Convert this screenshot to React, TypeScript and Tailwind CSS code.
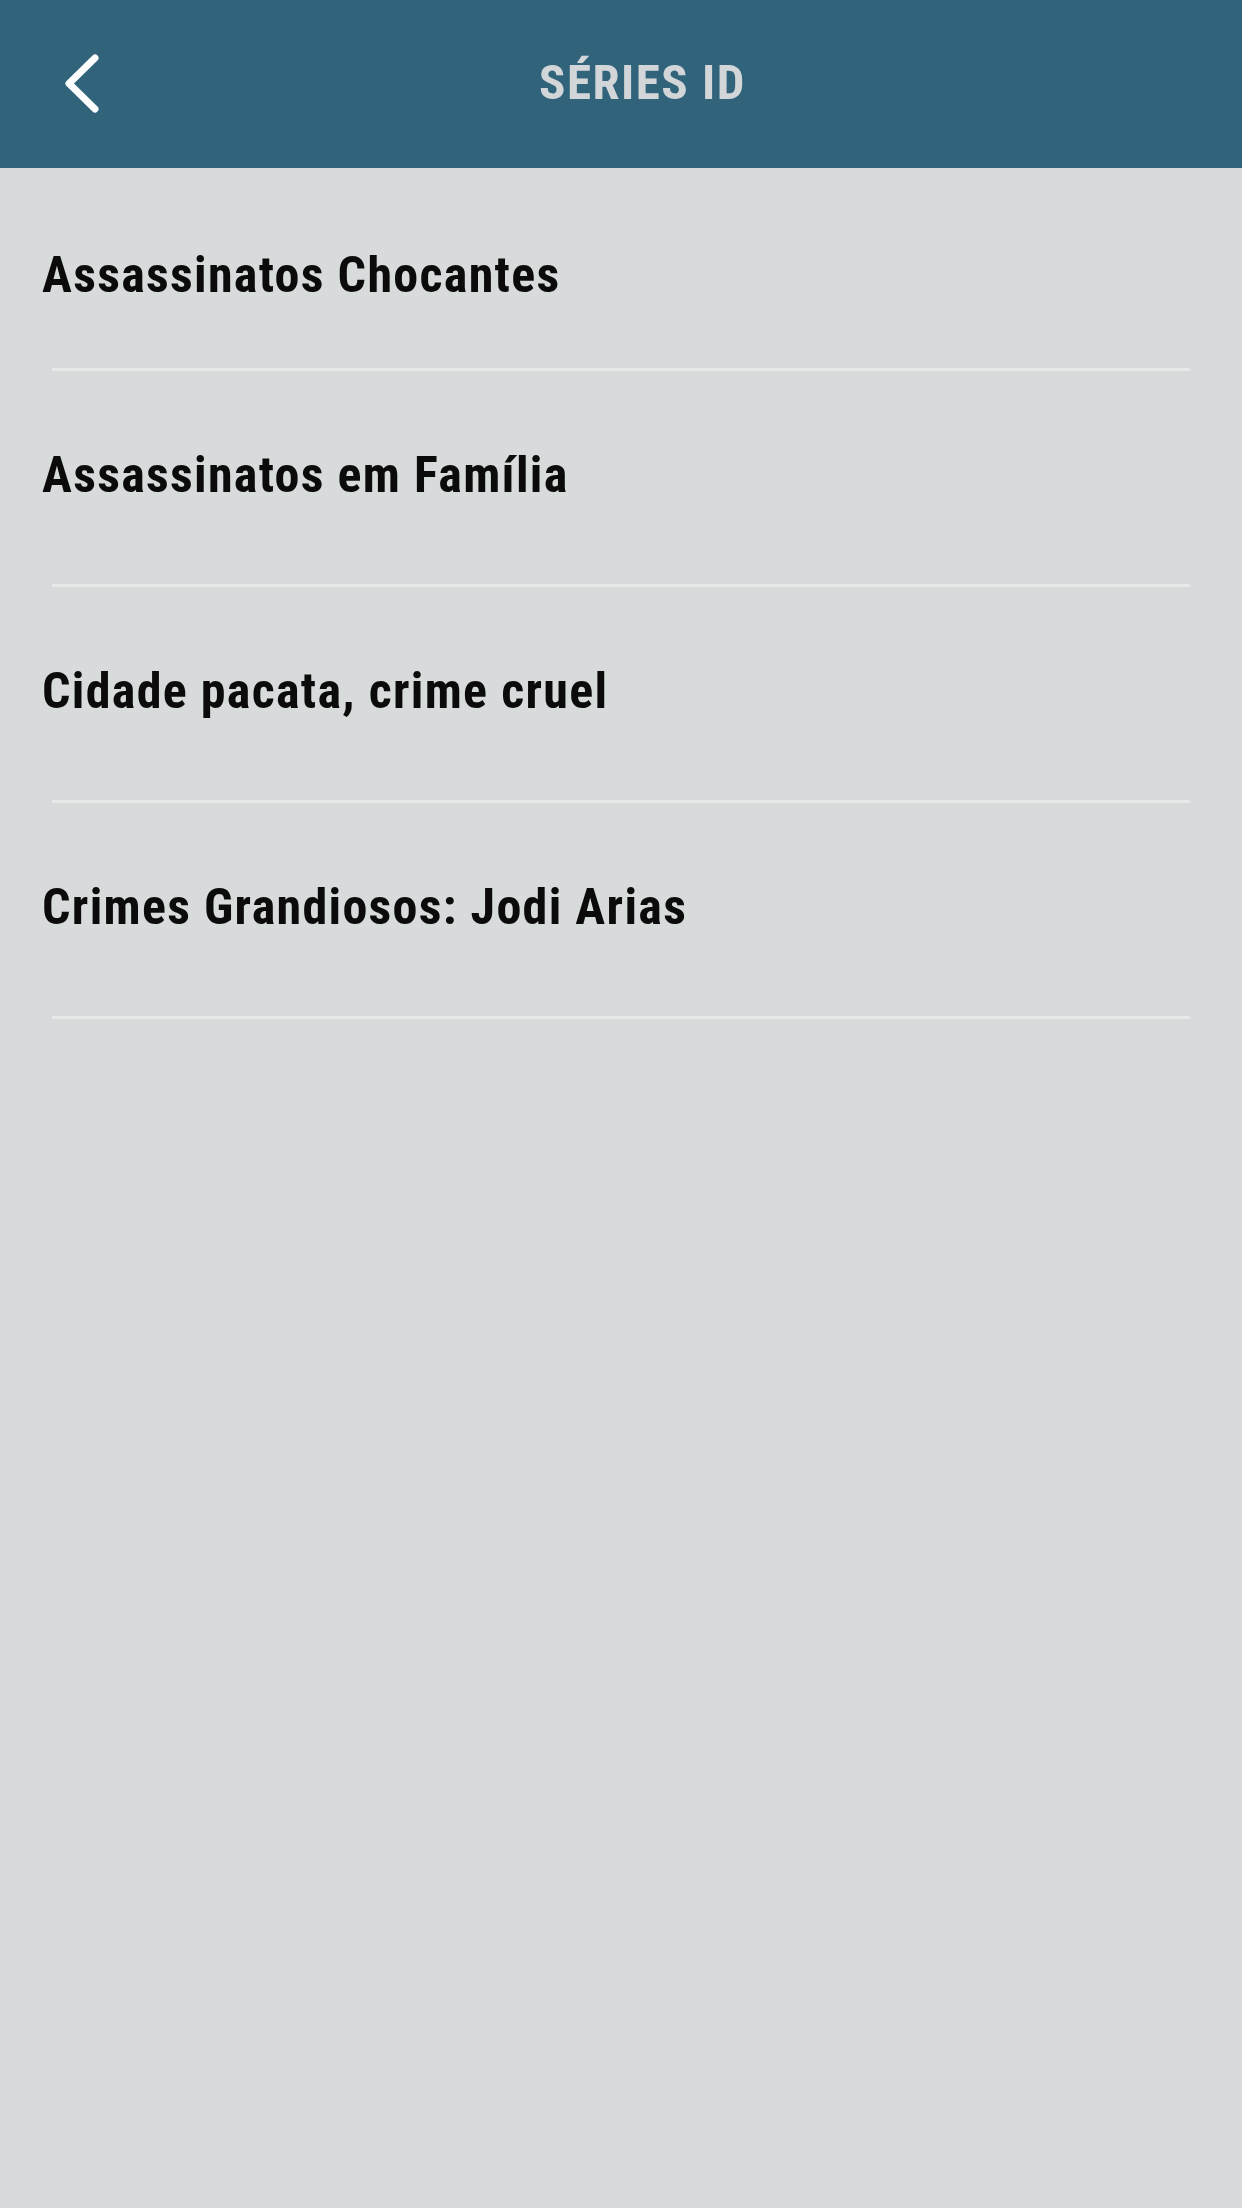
const items = [
  'Assassinatos Chocantes',
  'Assassinatos em Família',
  'Cidade pacata, crime cruel',
  'Crimes Grandiosos: Jodi Arias',
];

export default function App() {
  return (
    <div className="min-h-[2208px] w-full bg-[#d7dbdb]" style={{ fontFamily: 'Roboto, "Open Sans", sans-serif' }}>
      <header className="flex h-[168px] items-center bg-[#31637a]">
        <button className="ml-[62px] flex h-[60px] w-[40px] items-center justify-center" aria-label="Voltar">
          <svg width="40" height="60" viewBox="0 0 40 60" fill="none">
            <path d="M33 4 L7 29.5 L33 55" stroke="#ffffff" strokeWidth="7" strokeLinecap="round" strokeLinejoin="round" />
          </svg>
        </button>
        <h1 className="mb-[2px] flex-1 text-center text-[49px] font-bold [font-stretch:condensed] leading-[60px] tracking-[1.5px] text-[#d3d6d8]">
          SÉRIES ID
        </h1>
        <div className="w-[59px]" />
      </header>
      <ul>
        {items.map((t, i) => (
          <li key={t}>
            <div className={i === 0 ? 'h-[200px] pl-[42px] pt-[77px]' : 'h-[213px] pl-[42px] pt-[74px]'}>
              <span className="text-[50px] font-bold [font-stretch:condensed] leading-[60px] tracking-[1.3px] text-[#0b0b0b]">{t}</span>
            </div>
            <div className="mx-[52px] h-[3px] bg-[#e8eaea]" />
          </li>
        ))}
      </ul>
    </div>
  );
}
